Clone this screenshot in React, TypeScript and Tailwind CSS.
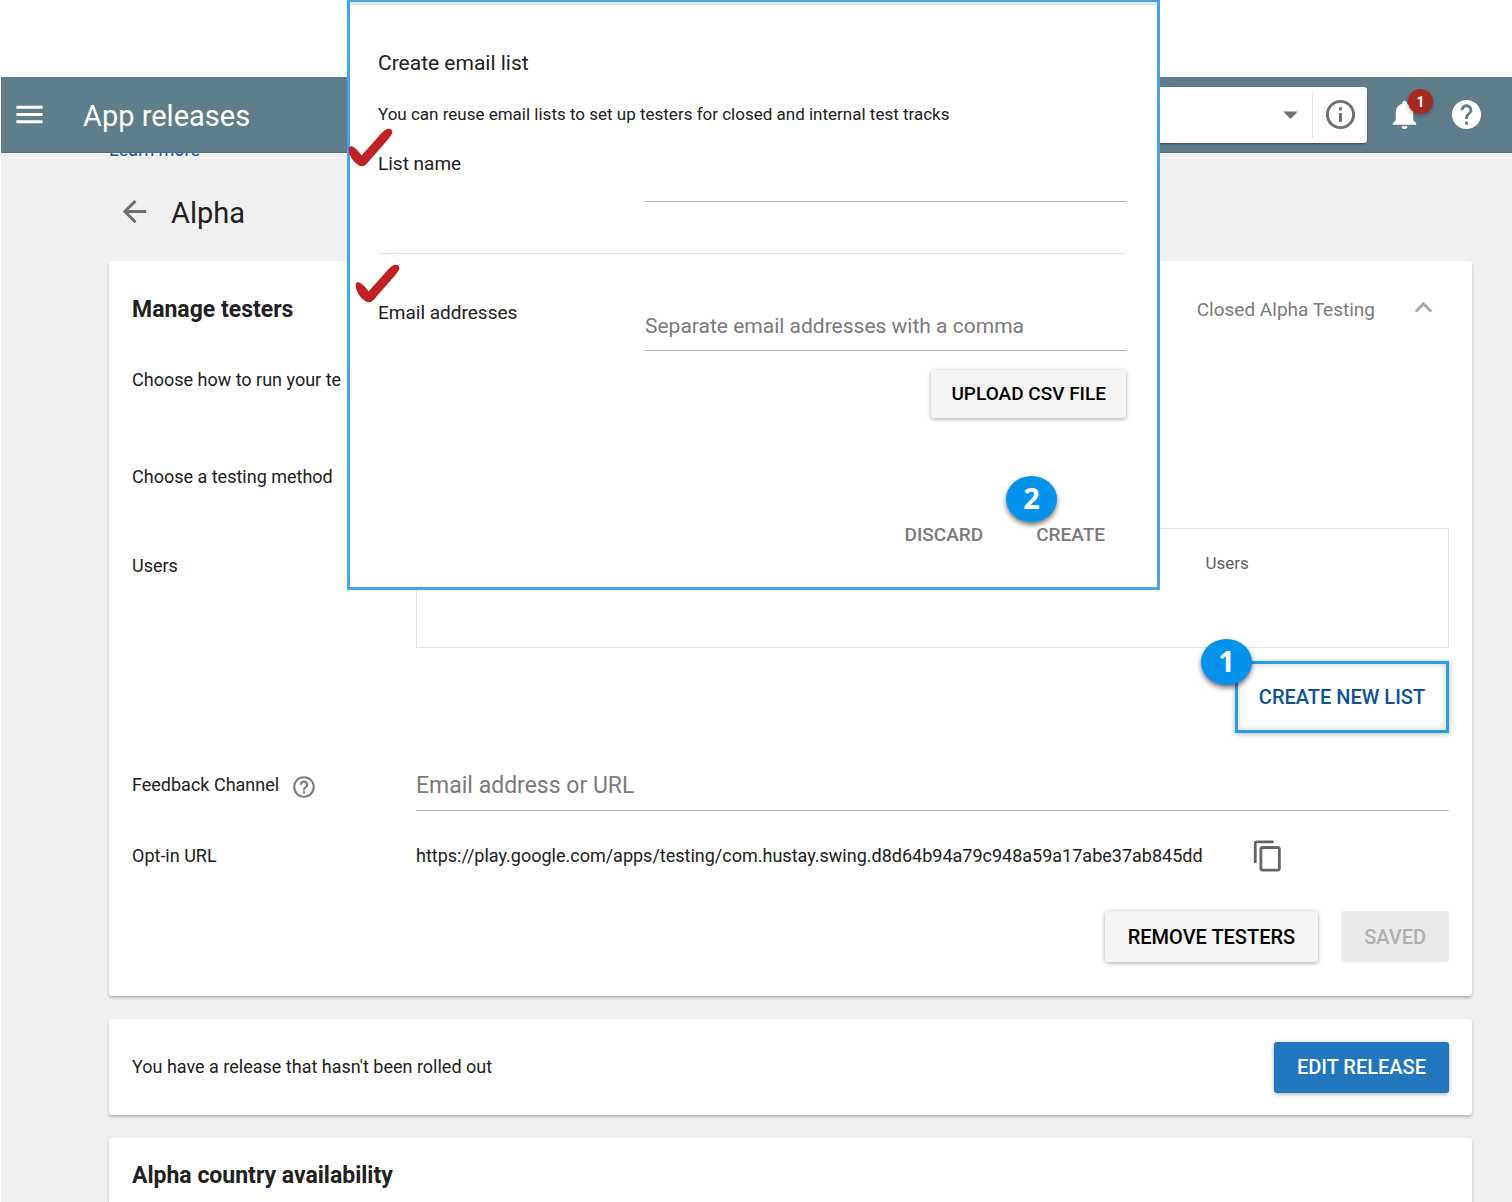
import React from "react";
import {
  MdArrowBack,
  MdArrowDropDown,
  MdContentCopy,
  MdExpandLess,
  MdHelp,
  MdHelpOutline,
  MdInfoOutline,
  MdMenu,
  MdNotifications,
} from "react-icons/md";

const raised = "shadow-[0_1px_4px_rgba(0,0,0,0.35)]";
const cardShadow = "shadow-[0_2px_3px_rgba(0,0,0,0.25)]";

function CheckMark({ className }: { className: string }) {
  return (
    <svg viewBox="0 0 135 117" className={`absolute h-[39px] w-[45px] ${className}`} aria-hidden="true">
      <path
        fill="#c02126"
        d="M2 62Q1 54 12 55Q22 58 41 82Q70 50 98 18Q112 2 122 2Q134 2 133 14Q128 26 110 46L66 96Q52 115 42 115Q30 114 16 98Q2 80 2 62Z"
      />
    </svg>
  );
}

function StepBadge({ label, className }: { label: string; className: string }) {
  return (
    <span
      className={`absolute flex h-[46px] w-[51px] items-center justify-center rounded-[50%] bg-[#0593ee] pb-0.5 font-['Open_Sans',sans-serif] text-[29px] font-bold text-white shadow-[0_3px_5px_rgba(0,0,0,0.55)] ${className}`}
    >
      {label}
    </span>
  );
}

function TopBar() {
  return (
    <header className="relative z-10 flex h-[76px] items-center border-b border-[#546e7a] bg-[#607d8b] pr-7 pl-[11px] text-white">
      <button aria-label="Menu">
        <MdMenu size={35} />
      </button>
      <h1 className="ml-9 pt-1 text-[29px]">App releases</h1>
      <div className="mr-5 ml-auto flex h-14 w-[600px] items-center rounded-[3px] bg-white pr-[9px] text-[#6f6f6f] shadow-[0_1px_2px_rgba(0,0,0,0.4)]">
        <input aria-label="Search" className="h-full min-w-0 flex-1 px-4 text-[19px] outline-none" />
        <button aria-label="Show options">
          <MdArrowDropDown size={35} />
        </button>
        <div className="mr-2.5 ml-1 h-[46px] w-px bg-[#e4e4e4]" />
        <button aria-label="Information">
          <MdInfoOutline size={35} />
        </button>
      </div>
      <button aria-label="Notifications" className="relative">
        <MdNotifications size={35} />
        <span className="absolute -top-2 left-[21px] flex size-[25px] items-center justify-center rounded-full bg-[#a52a20] text-sm font-bold shadow-[0_2px_4px_rgba(0,0,0,0.3)]">
          1
        </span>
      </button>
      <button aria-label="Help" className="ml-[27px]">
        <MdHelp size={35} />
      </button>
    </header>
  );
}

function EmailListDialog() {
  return (
    <section
      role="dialog"
      aria-label="Create email list"
      className="absolute top-0 right-[352px] left-[347px] z-20 border-3 border-t-2 border-[#47a3ea] bg-white pt-[49px] pr-[31px] pb-10 pl-7 text-[19px] leading-6 shadow-[inset_0_3px_0_#e4e9ed]"
    >
      <CheckMark className="top-[126px] -left-0.5" />
      <CheckMark className="top-[262px] left-[5px]" />
      <h2 className="text-[21px]">Create email list</h2>
      <p className="mt-[27px] text-[17px]">
        You can reuse email lists to set up testers for closed and internal test tracks
      </p>
      <div className="mt-[26px] grid grid-cols-[267px_1fr] border-b border-[#e0e0e0] pb-[51px] leading-6">
        <label htmlFor="list-name">List name</label>
        <input id="list-name" className="h-[50px] border-b border-[#b4b4b4] text-[21px] outline-none" />
      </div>
      <div className="mt-[47px] grid grid-cols-[267px_1fr] leading-6">
        <label htmlFor="emails">Email addresses</label>
        <input
          id="emails"
          placeholder="Separate email addresses with a comma"
          className="h-[50px] border-b border-[#b4b4b4] text-[21px] outline-none placeholder:text-[#7b7b7b]"
        />
      </div>
      <div className="mt-[19px] flex justify-end">
        <button className={`h-12 rounded-[3px] bg-[#f4f4f4] px-5 font-medium text-black ${raised}`}>
          UPLOAD CSV FILE
        </button>
      </div>
      <div className="relative mt-[105px] flex justify-end gap-[53px] pr-[21px] font-medium text-[#7b7b7b]">
        <button>DISCARD</button>
        <button>CREATE</button>
        <StepBadge label="2" className="right-[69px] bottom-[25px]" />
      </div>
    </section>
  );
}

export default function App() {
  return (
    <div className="relative flex min-h-screen flex-col bg-white pt-[77px] pl-px font-[Roboto,sans-serif] text-[#212121]">
      <TopBar />
      <EmailListDialog />
      <main className="flex flex-1 flex-col bg-[#f0f0f0] pr-10 pl-[108px] text-[18px] leading-6">
        <a href="#" className="-mt-[15px] self-start text-[#0d5aa7]">
          Learn more
        </a>
        <div className="mt-[31px] flex h-10 items-center gap-[19px] pl-2">
          <button aria-label="Back" className="pb-1 text-[#6f6f6f]">
            <MdArrowBack size={35} />
          </button>
          <h2 className="text-[29px]">Alpha</h2>
        </div>

        <section className={`mt-7 rounded-[3px] bg-white px-[23px] pt-[33px] pb-[34px] ${cardShadow}`}>
          <div className="flex h-8 items-center">
            <h3 className="text-[23px] font-bold">Manage testers</h3>
            <span className="ml-auto text-[19px] text-[#7b7b7b]">Closed Alpha Testing</span>
            <button aria-label="Collapse" className="mr-2 ml-[31px] pb-1.5 text-[#a8a8a8]">
              <MdExpandLess size={35} />
            </button>
          </div>
          <p className="mt-[42px]">Choose how to run your te</p>
          <p className="mt-[73px]">Choose a testing method</p>
          <div className="mt-[39px] grid grid-cols-[284px_1fr]">
            <span className="mt-[26px]">Users</span>
            <table className="h-[120px] w-full table-fixed border border-[#e2e2e2] text-left text-[17px] text-[#616161]">
              <thead>
                <tr>
                  <th aria-label="List" />
                  <th className="w-[243px] pt-[22px] align-top font-normal">Users</th>
                </tr>
              </thead>
            </table>
          </div>
          <div className="mt-[13px] flex justify-end">
            <div className="relative">
              <button className="h-[72px] w-[214px] border-3 border-[#26a0ea] text-[20px] font-medium text-[#0f5394] shadow-[0_1px_5px_rgba(0,0,0,0.3),inset_0_0_6px_rgba(0,0,0,0.2)]">
                CREATE NEW LIST
              </button>
              <StepBadge label="1" className="-top-[22px] -left-[34px]" />
            </div>
          </div>
          <div className="mt-[27px] grid grid-cols-[284px_1fr]">
            <div className="mt-[13px] flex h-6 items-center gap-3">
              <label htmlFor="feedback">Feedback Channel</label>
              <MdHelpOutline size={26} className="mt-1 text-[#7b7b7b]" />
            </div>
            <input
              id="feedback"
              placeholder="Email address or URL"
              className="h-[51px] border-b border-[#b4b4b4] text-[23px] outline-none placeholder:text-[#7b7b7b]"
            />
          </div>
          <div className="mt-[27px] grid h-9 grid-cols-[284px_1fr] items-center">
            <span>Opt-in URL</span>
            <div className="flex items-center gap-12">
              <span>https://play.google.com/apps/testing/com.hustay.swing.d8d64b94a79c948a59a17abe37ab845dd</span>
              <button aria-label="Copy" className="text-[#666666]">
                <MdContentCopy size={34} />
              </button>
            </div>
          </div>
          <div className="mt-[37px] flex justify-end gap-[23px] text-[20px] font-medium">
            <button className={`h-[51px] rounded-[3px] bg-[#f4f4f4] px-[23px] text-black ${raised}`}>
              REMOVE TESTERS
            </button>
            <button disabled className="h-[51px] rounded-[3px] bg-[#eaeaea] px-[23px] text-[#b0b0b0]">
              SAVED
            </button>
          </div>
        </section>

        <section className={`mt-[23px] flex h-24 items-center justify-between rounded-[3px] bg-white px-[23px] ${cardShadow}`}>
          <p>You have a release that hasn't been rolled out</p>
          <button className={`h-[51px] rounded-[3px] bg-[#2176bd] px-[23px] text-[20px] font-medium text-white ${raised}`}>
            EDIT RELEASE
          </button>
        </section>

        <section className={`mt-[23px] flex-1 rounded-t-[3px] bg-white px-[23px] pt-[26px] ${cardShadow}`}>
          <h3 className="text-[23px] font-bold">Alpha country availability</h3>
        </section>
      </main>
    </div>
  );
}
